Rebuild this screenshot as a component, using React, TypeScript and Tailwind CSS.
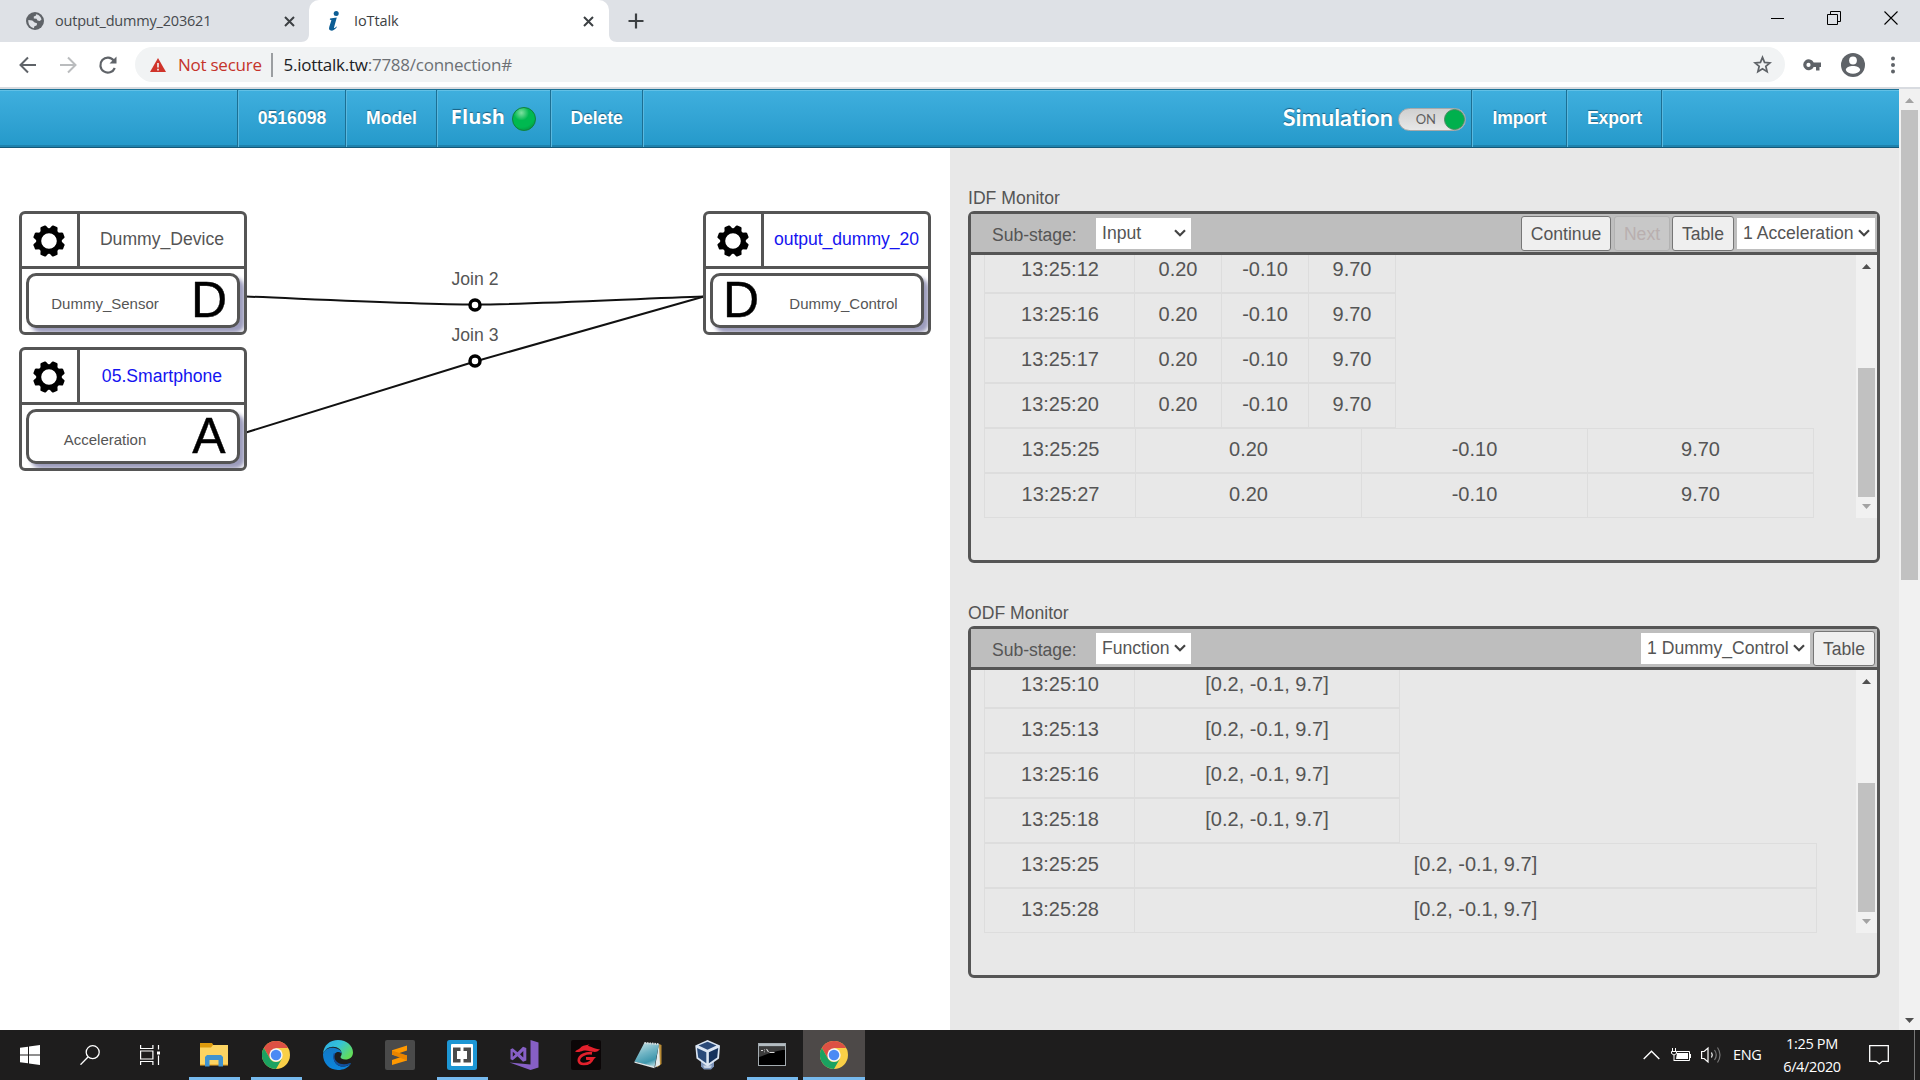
import type { ReactNode } from "react";

const ui = "font-['Open_Sans','Noto_Sans',sans-serif]";

function CloseX() {
  return (
    <svg width="11" height="11" viewBox="0 0 11 11" className="shrink-0">
      <path d="M1 1l9 9M10 1l-9 9" stroke="#3c4043" strokeWidth="2" fill="none" />
    </svg>
  );
}

function TabStrip() {
  return (
    <div className="flex h-[42px] bg-[#dee1e6]">
      <div className="flex w-[309px] items-center pl-[26px] pr-[14px]">
        <svg width="18" height="18" viewBox="0 0 18 18" className="shrink-0">
          <circle cx="9" cy="9" r="9" fill="#5f6368" />
          <path d="M10 2.2c2.500.2 5 2.500 5.500 5.300l-1.700 1.500-2.300-.5-1-1.800-2.700-.3 0-2 2-.7zM2.300 8l4 .6 2.300 2 2.400.7-.2 2-2.600 1.200-.2 1.700C4.500 15.500 2 12.500 2.300 8z" fill="#dee1e6" />
        </svg>
        <span className="ml-[11px] text-[14.500px] leading-[20px] tracking-[-0.2px] text-[#45494d]">output_dummy_203621</span>
        <span className="ml-auto"><CloseX /></span>
      </div>
      <div className="relative flex w-[300px] items-center rounded-t-[10px] bg-white pl-[19px] pr-[15px]">
        <svg width="12" height="20" viewBox="0 0 12 20" className="shrink-0">
          <circle cx="8.200" cy="2.600" r="2.500" fill="#0c5d94" />
          <path d="M2 7.600 8.800 6.500 6 16.400c-.2 1 .6.9 2.400-1l.5.6C6.500 19 4.600 20 2.800 19.600 1 19.200.7 17.800 1.300 15.800L3.400 9.200 1.800 8.600z" fill="#0c5d94" />
        </svg>
        <span className="ml-[14px] text-[14.500px] leading-[20px] tracking-[-0.1px] text-[#3c4043]">IoTtalk</span>
        <span className="ml-auto"><CloseX /></span>
        <svg width="8" height="8" viewBox="0 0 8 8" className="absolute bottom-0 -left-2"><path d="M8 0v8H0C5 8 8 5 8 0z" fill="#fff" /></svg>
        <svg width="8" height="8" viewBox="0 0 8 8" className="absolute -right-2 bottom-0"><path d="M0 0v8h8C3 8 0 5 0 0z" fill="#fff" /></svg>
      </div>
      <div className="flex w-[54px] items-center justify-center">
        <svg width="16" height="16" viewBox="0 0 16 16"><path d="M8 .5v15M.5 8h15" stroke="#3c4043" strokeWidth="2.200" /></svg>
      </div>
      <div className="ml-auto flex h-9 w-[172px] items-center">
        <div className="flex w-[58px] justify-center"><span className="h-px w-[13px] bg-black" /></div>
        <div className="flex w-[56px] justify-center">
          <svg width="14" height="14" viewBox="0 0 14 14" fill="none" stroke="#000"><path d="M.5 3.500h10v10H.5zM3.500 3V.5h10v10H11" /></svg>
        </div>
        <div className="flex w-[58px] justify-center">
          <svg width="14" height="14" viewBox="0 0 14 14" fill="none" stroke="#000" strokeWidth="1.100"><path d="M.5.5l13 13M13.500.5l-13 13" /></svg>
        </div>
      </div>
    </div>
  );
}

function AddressBar() {
  return (
    <div className="flex h-[47px] items-center border-b-2 border-[#d8dbe0] bg-white">
      <div className="flex w-[135px] items-center pl-[19px]">
        <svg width="18" height="18" viewBox="0 0 18 18" fill="none" stroke="#5f6368" strokeWidth="2"><path d="M17 9H2M9 1.500 1.500 9 9 16.500" /></svg>
        <svg width="18" height="18" viewBox="0 0 18 18" fill="none" stroke="#babcbe" strokeWidth="2" className="ml-[22px]"><path d="M1 9h15M9 1.500 16.500 9 9 16.500" /></svg>
        <svg width="20" height="20" viewBox="0 0 20 20" fill="none" stroke="#5f6368" strokeWidth="2.200" className="ml-[21px]"><path d="M16.800 13a7.500 7.500 0 1 1-1-7.500" /><path d="M18.500 1.500v7h-7z" fill="#5f6368" stroke="none" /></svg>
      </div>
      <div className="flex h-[35px] w-[1650px] items-center rounded-full bg-[#f1f3f4] pl-[15px] pr-[13px] text-[17px] leading-6">
        <svg width="16" height="14" viewBox="0 0 16 14" className="shrink-0"><path d="M8 0l8 14H0z" fill="#d0342b" /><path d="M8 5v4.500M8 10.700v1.700" stroke="#f1f3f4" strokeWidth="1.600" /></svg>
        <span className="ml-[12px] w-[84px] whitespace-nowrap tracking-[-0.25px] text-[#c5332b]">Not secure</span>
        <span className="ml-[9px] h-6 w-[1.500px] bg-[#9b9ea1]" />
        <span className="ml-[11px] tracking-[-0.25px] text-[#202124]">5.iottalk.tw<span className="text-[#6c7074]">:7788/connection#</span></span>
        <svg width="19" height="19" viewBox="0 0 24 24" className="ml-auto" fill="none" stroke="#5f6368" strokeWidth="2.200"><path d="M12 3l2.600 6.300 6.800.6-5.200 4.400 1.600 6.700L12 17.400 6.200 21l1.600-6.700-5.200-4.400 6.800-.6z" /></svg>
      </div>
      <svg width="18" height="12" viewBox="0 0 18 12" className="ml-[18px]"><path d="M10.700 3.500A5.500 5.500 0 1 0 10.700 8H13v3.500h3.500V8H18V3.500zM5.500 8a2 2 0 1 1 0-4.200 2 2 0 0 1 0 4.200z" fill="#5f6368" /></svg>
      <svg width="24" height="24" viewBox="0 0 24 24" className="ml-[20px]"><circle cx="12" cy="12" r="12" fill="#5f6368" /><circle cx="12" cy="7.500" r="3.900" fill="#fff" /><path d="M4.800 17c.4-5.200 14-5.200 14.400 0-2 5-12.400 5-14.400 0z" fill="#fff" /></svg>
      <svg width="4" height="18" viewBox="0 0 4 18" className="ml-[26px]" fill="#5f6368"><circle cx="2" cy="2.500" r="2" /><circle cx="2" cy="9" r="2" /><circle cx="2" cy="15.500" r="2" /></svg>
    </div>
  );
}

function NavCell({ w, children }: { w: string; children?: ReactNode }) {
  return (
    <div className={"flex h-full shrink-0 items-center justify-center border-r border-[#1c6f93] shadow-[1px_0_0_#5bb9df] " + w}>{children}</div>
  );
}

function NavBar() {
  return (
    <div className="flex h-[59px] border-t border-b border-t-[#1d7397] border-b-[#14597a] bg-gradient-to-b from-[#3fafde] to-[#2499ca] font-['Liberation_Sans',Arial,sans-serif] text-[17.600px] font-bold text-white shadow-[inset_0_-2px_0_#1e82ad,inset_0_1px_0_#62c0e5] [text-shadow:0_-1px_1px_#1b5f80]">
      <NavCell w="w-[238px]" />
      <NavCell w="w-[108px]"><span className="pl-px">0516098</span></NavCell>
      <NavCell w="w-[91px]"><span className="pl-px">Model</span></NavCell>
      <NavCell w="w-[114px]">
        <span className="mr-[7px] -mt-[4px] font-['Open_Sans','Noto_Sans',sans-serif] text-[20px] leading-6 tracking-[0.2px]">Flush</span>
        <span className="h-6 w-6 rounded-full border border-[#13803f] bg-[#00b950] bg-[radial-gradient(circle_at_38%_22%,#7fe0a0_0%,#00b950_35%,#00b950_65%,#087c38_100%)]" />
      </NavCell>
      <NavCell w="w-[92px]"><span className="tracking-[-0.1px]">Delete</span></NavCell>
      <div className="ml-auto flex h-full w-[829px] items-center justify-end border-r border-[#1c6f93] pr-[5px] shadow-[1px_0_0_#5bb9df]">
        <span className="-mt-[3px] mr-[5px] font-[Lato,sans-serif] text-[23.500px] leading-7 tracking-[-0.05px]">Simulation</span>
        <span className="mt-[2px] flex h-[23px] w-[68px] items-center justify-end rounded-full border border-[#a9a9a9] bg-gradient-to-b from-[#d0d0d0] to-[#e8e8e8] font-[Lato,sans-serif] text-[13px] font-normal text-[#606060] [text-shadow:none]">
          ON<span className="ml-[8px] h-[21px] w-[21px] rounded-full border border-[#4c8a64] bg-[#00b04d]" />
        </span>
      </div>
      <NavCell w="w-[95px]"><span className="pl-px tracking-[-0.1px]">Import</span></NavCell>
      <NavCell w="w-[95px]"><span className="pl-px tracking-[-0.1px]">Export</span></NavCell>
      <div className="w-[237px]" />
    </div>
  );
}

function Gear() {
  const teeth = [22.5, 67.5, 112.5, 157.5, 202.5, 247.5, 292.5, 337.5];
  return (
    <svg width="32" height="32" viewBox="-16 -16 32 32">
      <circle r="10.300" fill="none" stroke="#000" strokeWidth="5" />
      {teeth.map((a) => (
        <path key={a} d="M-4.500-11 L-3-15.200Q-2.700-16 -1.900-16H1.900Q2.700-16 3-15.200L4.500-11z" transform={"rotate(" + a + ")"} />
      ))}
    </svg>
  );
}

interface NodeProps {
  place: string;
  title: string;
  titleClass: string;
  feature: string;
  letter: string;
  output?: boolean;
}

function DeviceNode({ place, title, titleClass, feature, letter, output }: NodeProps) {
  const glyph = (
    <span className={"flex w-[36px] shrink-0 justify-center text-[50px] leading-[49px] text-black [-webkit-text-stroke:0.4px_black] " + (output ? "-mr-[2px]" : "")}>{letter}</span>
  );
  return (
    <div className={"absolute h-[123.500px] w-[228px] overflow-hidden rounded-[6px] border-[3px] border-[#555] bg-white " + place}>
      <div className="flex h-[55px] border-b-[3px] border-[#555]">
        <div className="flex w-[58px] items-center justify-center border-r-[3px] border-[#555] pr-[2px] pt-[2px]"><Gear /></div>
        <div className="flex flex-1 justify-center pt-[11px]">
          <span className={"whitespace-nowrap text-[17.600px] leading-[28px] " + titleClass}>{title}</span>
        </div>
      </div>
      <div className={"ml-1 mt-1 flex h-[55px] w-[214px] items-center rounded-[10px] border-[3px] border-[#555] bg-white text-[15px] text-[#555] shadow-[5px_5px_4px_#9c9cbc] " + (output ? "pl-[10px]" : "pr-[10px]")}>
        {output && glyph}
        <span className={"flex-1 pt-[8px] text-center " + (output ? "pl-[9px]" : "pr-[10px]")}>{feature}</span>
        {!output && glyph}
      </div>
    </div>
  );
}

function Canvas() {
  return (
    <div className="relative w-[950px] overflow-hidden bg-white">
      <svg width="950" height="882" viewBox="0 148 950 882" className="absolute left-0 top-0">
        <g fill="none" stroke="#111" strokeWidth="2">
          <path d="M246 296.500C320 299.500 420 304.500 475 304.500S640 298.500 704 296.500" />
          <path d="M246 432.500 475 361.500 704 296.500" />
        </g>
        <g fill="#fff" stroke="#000" strokeWidth="3.500">
          <circle cx="475" cy="305" r="5" />
          <circle cx="475" cy="361" r="5" />
        </g>
      </svg>
      <span className="absolute left-[425px] top-[119px] w-[100px] text-center text-[17.600px] leading-[24px] text-[#555]">Join 2</span>
      <span className="absolute left-[425px] top-[175px] w-[100px] text-center text-[17.600px] leading-[24px] text-[#555]">Join 3</span>
      <DeviceNode place="left-[19px] top-[63px]" title="Dummy_Device" titleClass="text-[#555]" feature="Dummy_Sensor" letter="D" />
      <DeviceNode place="left-[19px] top-[199px]" title="05.Smartphone" titleClass="text-[#1414f0] pt-px" feature="Acceleration" letter="A" />
      <DeviceNode place="left-[703px] top-[63px]" title="output_dummy_20" titleClass="pl-px text-[#1414f0] tracking-[-0.05px]" feature="Dummy_Control" letter="D" output />
    </div>
  );
}

function Select({ w, children }: { w: string; children: ReactNode }) {
  return (
    <div className={"flex h-[31px] shrink-0 items-center bg-white pl-[6px] pr-[5px] " + w}>
      <span className="whitespace-nowrap">{children}</span>
      <svg width="12" height="8" viewBox="0 0 12 8" className="ml-auto shrink-0"><path d="M1 1.200 6 6.200l5-5" fill="none" stroke="#444" strokeWidth="2.200" /></svg>
    </div>
  );
}

function Button({ w, disabled, children }: { w: string; disabled?: boolean; children: ReactNode }) {
  return (
    <div className={"flex h-[35px] shrink-0 items-center justify-center rounded-[3px] border pt-[2px] " + (disabled ? "border-[#b2b2b2] bg-[#c8c8c8] text-[#b9afaf] " : "border-[#767676] bg-[#efefef] ") + w}>{children}</div>
  );
}

function Row({ cells }: { cells: [string, string][] }) {
  return (
    <div className="flex h-[45px] shrink-0">
      {cells.map(([w, text], i) => (
        <div key={i} className={"flex shrink-0 items-center justify-center border-y border-r border-[#ddd] pb-[3px] first:border-l first:pl-px " + w}>{text}</div>
      ))}
    </div>
  );
}

function PaneScroll() {
  return (
    <div className="flex h-[263px] w-[21px] flex-col items-center bg-[#f1f1f1]">
      <svg width="9" height="5" viewBox="0 0 9 5" className="mt-[9px]"><path d="M4.500 0 9 5H0z" fill="#505050" /></svg>
      <div className="mt-[99px] h-[129px] w-[17px] bg-[#c1c1c1]" />
      <svg width="9" height="5" viewBox="0 0 9 5" className="mt-[7px]"><path d="M0 0h9L4.500 5z" fill="#a3a3a3" /></svg>
    </div>
  );
}

function Monitor({ title, stage, controls, rows, margin }: { title: string; stage: string; controls: ReactNode; rows: [string, string][][]; margin: string }) {
  return (
    <section className={margin}>
      <h2 className="h-[28px] pt-px text-[17.600px] leading-[28px]">{title}</h2>
      <div className="h-[352px] rounded-[6px] border-[3px] border-[#555]">
        <div className="flex h-[41px] items-center border-b-[3px] border-[#555] bg-[#bebebe] pr-[2px] text-[17.600px]">
          <span className="w-[125px] pl-[21px] pt-[5px] tracking-[-0.05px]">Sub-stage:</span>
          <Select w="w-[95px]">{stage}</Select>
          <div className="ml-auto flex items-center">{controls}</div>
        </div>
        <div className="flex h-[263px] justify-between overflow-hidden">
          <div className="-mt-[7px] flex flex-col pl-[13px] text-[20px]">
            {rows.map((r, i) => <Row key={i} cells={r} />)}
          </div>
          <PaneScroll />
        </div>
      </div>
    </section>
  );
}

const idfNarrow = (t: string): [string, string][] => [["w-[151px]", t], ["w-[87px]", "0.20"], ["w-[87px]", "-0.10"], ["w-[87px]", "9.70"]];
const idfWide = (t: string): [string, string][] => [["w-[152px]", t], ["w-[226px]", "0.20"], ["w-[226px]", "-0.10"], ["w-[226px]", "9.70"]];
const odfNarrow = (t: string): [string, string][] => [["w-[151px]", t], ["w-[265px]", "[0.2, -0.1, 9.7]"]];
const odfWide = (t: string): [string, string][] => [["w-[151px]", t], ["w-[682px]", "[0.2, -0.1, 9.7]"]];

const idfRows = [...["13:25:12", "13:25:16", "13:25:17", "13:25:20"].map(idfNarrow), ...["13:25:25", "13:25:27"].map(idfWide)];
const odfRows = [...["13:25:10", "13:25:13", "13:25:16", "13:25:18"].map(odfNarrow), ...["13:25:25", "13:25:28"].map(odfWide)];

function Monitors() {
  return (
    <div className="w-[949px] bg-[#e8e8e8] pl-[18px] pr-[19px] pt-[35px] text-[#555]">
      <Monitor
        title="IDF Monitor"
        stage="Input"
        rows={idfRows}
        margin=""
        controls={
          <>
            <Button w="w-[90px]">Continue</Button>
            <Button w="ml-[3px] w-[56px]" disabled>Next</Button>
            <Button w="ml-[2px] mr-[3px] w-[62px]">Table</Button>
            <Select w="w-[138px]">1 Acceleration</Select>
          </>
        }
      />
      <Monitor
        title="ODF Monitor"
        stage="Function"
        rows={odfRows}
        margin="mt-[35px]"
        controls={
          <>
            <Select w="w-[169px]">1 Dummy_Control</Select>
            <Button w="ml-[3px] w-[62px]">Table</Button>
          </>
        }
      />
    </div>
  );
}

function PageScroll() {
  return (
    <div className="flex w-[21px] flex-col items-center bg-[#f1f1f1]">
      <svg width="9" height="5" viewBox="0 0 9 5" className="mt-[9px]"><path d="M4.500 0 9 5H0z" fill="#a3a3a3" /></svg>
      <div className="mt-[7px] h-[470px] w-[17px] bg-[#c1c1c1]" />
      <svg width="9" height="5" viewBox="0 0 9 5" className="mb-[7px] mt-auto"><path d="M0 0h9L4.500 5z" fill="#505050" /></svg>
    </div>
  );
}

function ChromeLogo() {
  return (
    <svg width="28" height="28" viewBox="-24 -24 48 48">
      <circle r="24" fill="#f9cf47" />
      <path d="M-20.800-12A24 24 0 0 1 20.800-12H0L-10.400 6z" fill="#dd5144" />
      <path d="M-20.800-12A24 24 0 0 0 0 24L10.400 6A12 12 0 0 1-10.400 6z" fill="#1ba261" />
      <circle r="11.500" fill="#f4f6f8" />
      <circle r="9" fill="#4a8af4" />
    </svg>
  );
}

function ExplorerIcon() {
  return (
    <svg width="28" height="24" viewBox="0 0 28 24">
      <path d="M0 0h12l2 3-1 3H0z" fill="#dd9a0c" />
      <path d="M0 4.500h11L13 2h15v20H0z" fill="#fcd462" />
      <path d="M0 21h28v1.500H0z" fill="#f3b93b" />
      <path d="M5 23.500V14l2-2h14l2 2v9.500h-4.500V17h-9v6.500z" fill="#3f93d0" />
    </svg>
  );
}

function EdgeIcon() {
  return (
    <svg width="30" height="30" viewBox="0 0 30 30">
      <defs>
        <linearGradient id="edgeTop" x1="0" y1="0" x2="1" y2=".6"><stop offset="0" stopColor="#2aa9e6" /><stop offset=".5" stopColor="#35c3d8" /><stop offset="1" stopColor="#62dc5b" /></linearGradient>
        <linearGradient id="edgeLow" x1="0" y1="0" x2="0" y2="1"><stop offset="0" stopColor="#1279c6" /><stop offset="1" stopColor="#0c86dd" /></linearGradient>
      </defs>
      <path d="M0 14C.6 5 7 0 15 0c9 0 15 6 15 12.500 0 4.500-3.500 7-7.500 7-3 0-5-1-5-2.500 0-.8 1.200-1.300 1.200-3.500C18.700 10 15 6.800 10 6.800 5 6.800 1.500 10 0 14z" fill="url(#edgeTop)" />
      <path d="M0 14c1.500-4 5-6.200 9-6.200 5.500 0 9.500 2.700 9.700 5.700-1-1-2.200-1.500-3.500-1.500-3 0-4.700 3-4.500 6 .3 5.500 5 9 10.300 8.500 2.500-.2 4.500-1 7-3C25 28 20.500 30 15 30 6 30-.2 23 0 14z" fill="url(#edgeLow)" />
      <path d="M10.500 13.500c-1.500 6.500 2.500 12.500 8.500 13 3.500.2 6-1 8.500-2.500.7-.4.200-1.300-.5-1-8 3-15.500 0-15.500-6.500 0-1.300.3-2.300.8-3.200z" fill="#124f9d" />
    </svg>
  );
}

function SublimeIcon() {
  return (
    <svg width="30" height="30" viewBox="0 0 30 30">
      <rect width="30" height="30" rx="2" fill="#4a4a4a" />
      <path d="M7 10.300 22 5.500v5l-9 3 9 2v5L7 25v-5l9-3-9-2.200z" fill="#ff9800" />
      <path d="M7 14.500v-4l15 5v5z" fill="#e98400" />
    </svg>
  );
}

function BracketsIcon() {
  return (
    <svg width="30" height="30" viewBox="0 0 30 30">
      <rect width="30" height="30" rx="2.500" fill="#1d96d4" />
      <rect x="4" y="4" width="22" height="22" rx="1" fill="#fff" />
      <path d="M13.500 7.500H6v15h7.500v-3.500H10v-8h3.500zM16.500 7.500H24v15h-7.500v-3.500H20v-8h-3.500z" fill="#4b4b4b" />
    </svg>
  );
}

function VisualStudioIcon() {
  return (
    <svg width="30" height="30" viewBox="0 0 30 30">
      <path d="M21.500 0 29.500 2.500v25L21.500 30 .5 22.500l21 2z" fill="#865fc5" />
      <path fillRule="evenodd" d="M1.500 9.300 3.700 8.300 8.500 12.300 14 6.800l3.300 1.200v12.500L14 21.700l-5.500-5.500-4.800 4-2.200-1zM3.800 11.700v5l2.600-2.500zM14.300 11 11 14.200l3.300 3.300z" fill="#865fc5" />
    </svg>
  );
}

function GarenaIcon() {
  return (
    <svg width="30" height="30" viewBox="0 0 30 30">
      <rect width="30" height="30" rx="2" fill="#0b0607" />
      <path d="M4 11.500c1.500-1.500 3.500-1.800 5.500-3.800C12 5.200 14.500 5.500 18.500 4.300c-.6.8-1.300 1.200-1.800 1.500 2 .4 4 1.400 6 2.300 2.200.9 4.300 1.500 6.300 1-1.500 2.300-4 3.200-7 2.700-3.500-.6-6.500-1.900-10-1-2.500.7-4.500 2-8 .7z" fill="#e3202c" />
      <path d="M21 13.300c-6-.7-13 2-13.200 7 0 2.700 2.200 3.700 5 3.700 5 0 8.300-2.700 8.700-5.700H15" stroke="#e3202c" strokeWidth="2.700" fill="none" />
      <path d="M17 17h8l-3 3h-6.500z" fill="#e3202c" />
    </svg>
  );
}

function NotepadIcon() {
  return (
    <svg width="28" height="28" viewBox="0 0 28 28">
      <defs>
        <linearGradient id="notePage" x1=".2" y1="0" x2=".6" y2="1"><stop offset="0" stopColor="#c4dfe4" /><stop offset=".45" stopColor="#6fb4c4" /><stop offset=".8" stopColor="#3f97ad" /><stop offset="1" stopColor="#a5d3dc" /></linearGradient>
      </defs>
      <path d="M25 3l2.500 1v19l-4.500 3.500z" fill="#b98b35" />
      <path d="M25 2.500 26 24l-5 2.500z" fill="#e3ebec" />
      <path d="M10.500 1.500 25 3l-4.500 23L.5 20.500z" fill="url(#notePage)" />
      <path d="M.5 20.500 20.500 25.500v1.800L.5 21.700z" fill="#dfe8ea" />
      <path d="M10.500 2 25 3.200" stroke="#d5dadb" strokeWidth="2" strokeDasharray="1.500 1" />
    </svg>
  );
}

function VirtualBoxIcon() {
  return (
    <svg width="26" height="30" viewBox="0 0 26 30" className="-ml-[4px]">
      <path d="M6 20h13v6.500L16 29.500H9L6 26.500z" fill="#7c93b8" />
      <path d="M8 25.500h9l-1.500 2.500h-6z" fill="#c5d2e4" />
      <path d="M12.500 0 25 5.500 24 18.500 12.500 26.500 1.500 18.500 .3 5.500z" fill="#dbe6f3" />
      <path d="M12.500 1.800 21.500 5.600 12.500 9.800 3.500 5.600z" fill="#2b4a78" />
      <path d="M2 8l9.300 4.300v10.900L3.200 17.500z" fill="#294b7a" />
      <path d="M23.200 8 13.900 12.300v10.900l8.300-5.700z" fill="#16335d" />
    </svg>
  );
}

function TerminalIcon() {
  return (
    <svg width="28" height="23" viewBox="0 0 28 23" className="-ml-[1px]">
      <rect x=".5" y=".5" width="27" height="22" fill="#000" stroke="#a3abb0" />
      <path d="M1 1h26v2.500H1z" fill="#b4bcc1" />
      <path d="M1 3.500h26V7C20 7 12 10 1 14z" fill="#3b3b3b" />
      <path d="M3 7.500h2M6.500 6.500v.8M6.500 8.500v.8M8.500 6l2 3M11.500 9.500h5" stroke="#d8d8d8" strokeWidth="1.100" fill="none" />
    </svg>
  );
}

function TaskButton({ open, active, children }: { open?: boolean; active?: boolean; children: ReactNode }) {
  return (
    <div className={"relative flex h-full w-[62px] items-center justify-center pb-[1px] " + (active ? "bg-[#4d4948]" : "")}>
      {children}
      {(open || active) && <span className={"absolute bottom-0 h-[3px] bg-[#76b9ed] " + (active ? "w-[62px]" : "w-[51px]")} />}
    </div>
  );
}

function Taskbar() {
  return (
    <div className="flex h-[50px] items-center bg-[#1e1d1d] text-white">
      <div className="flex w-[60px] justify-center">
        <svg width="20" height="20" viewBox="0 0 20 20" fill="#fff"><path d="M0 2.800 8 1.700v7.800H0zM9 1.500 20 0v9.500H9zM0 10.500h8v7.800L0 17.200zM9 10.500h11V20L9 18.500z" /></svg>
      </div>
      <div className="flex w-[60px] justify-center">
        <svg width="20" height="20" viewBox="0 0 20 20" fill="none" stroke="#fff" strokeWidth="1.300"><circle cx="12.700" cy="7.200" r="6.500" /><path d="M8 12 .5 19.700" /></svg>
      </div>
      <div className="flex w-[63px] pl-5">
        <svg width="21" height="20" viewBox="0 0 21 20" fill="none" stroke="#fff" strokeWidth="1.200"><path d="M.6 0v3.500h12.300V0M.6 20v-3.500h12.300V20M.6 6h12.300v8H.6zM18.500 0v4.500M18.500 10.500V20" /><path d="M17 6.500h3v3h-3z" fill="#fff" stroke="none" /></svg>
      </div>
      <TaskButton open><ExplorerIcon /></TaskButton>
      <TaskButton open><ChromeLogo /></TaskButton>
      <TaskButton><EdgeIcon /></TaskButton>
      <TaskButton><SublimeIcon /></TaskButton>
      <TaskButton open><BracketsIcon /></TaskButton>
      <TaskButton><VisualStudioIcon /></TaskButton>
      <TaskButton><GarenaIcon /></TaskButton>
      <TaskButton><NotepadIcon /></TaskButton>
      <TaskButton><VirtualBoxIcon /></TaskButton>
      <TaskButton open><TerminalIcon /></TaskButton>
      <TaskButton active><ChromeLogo /></TaskButton>
      <div className="ml-auto flex h-full items-center">
        <svg width="17" height="10" viewBox="0 0 17 10" fill="none" stroke="#fff" strokeWidth="1.400"><path d="M.7 9 8.500 1.200 16.300 9" /></svg>
        <svg width="20" height="14" viewBox="0 0 20 14" className="ml-[11px]" fill="none" stroke="#fff"><path d="M5.500 3.500H18.500v9H3" /><path d="M6 5h11v6H5z" fill="#fff" stroke="none" /><path d="M19.500 6v4M1.500 0v3M4.500 0v3M.5 3.500h5v2l-2.500 1.500L.5 5.500zM3 7v6" /></svg>
        <svg width="21" height="18" viewBox="0 0 21 18" className="ml-[10px]" fill="none" stroke="#fff" strokeWidth="1.200"><path d="M.6 5.500h2.500L7 2v14l-3.900-3.500H.6z" /><path d="M10.500 6.500q1.500 2.500 0 5" /><path d="M13.500 4q3.500 5 0 10M16.500 1.500q5 7.500 0 15" stroke="#777" /></svg>
        <span className="ml-[11px] w-[30px] text-[14.500px] tracking-[-0.3px]">ENG</span>
        <div className="ml-[8px] w-[82px] text-center text-[14.500px] leading-[23px] tracking-[-0.35px]">
          <div>1:25 PM</div>
          <div>6/4/2020</div>
        </div>
        <svg width="20" height="20" viewBox="0 0 20 20" className="ml-[16px]" fill="none" stroke="#fff" strokeWidth="1.300"><path d="M.7.7h18.600v15.600h-6L10.300 19l-3-2.700H.7z" /></svg>
        <span className="ml-[25px] mr-[5px] h-full w-px bg-[#777]" />
      </div>
    </div>
  );
}

export default function App() {
  return (
    <div className="flex h-[1080px] w-[1920px] flex-col overflow-hidden bg-white">
      <div className={ui}>
        <TabStrip />
        <AddressBar />
      </div>
      <div className="flex h-[941px] font-['Liberation_Sans',Arial,sans-serif]">
        <div className="flex w-[1899px] flex-col">
          <NavBar />
          <div className="flex flex-1">
            <Canvas />
            <Monitors />
          </div>
        </div>
        <PageScroll />
      </div>
      <div className={ui}>
        <Taskbar />
      </div>
    </div>
  );
}
